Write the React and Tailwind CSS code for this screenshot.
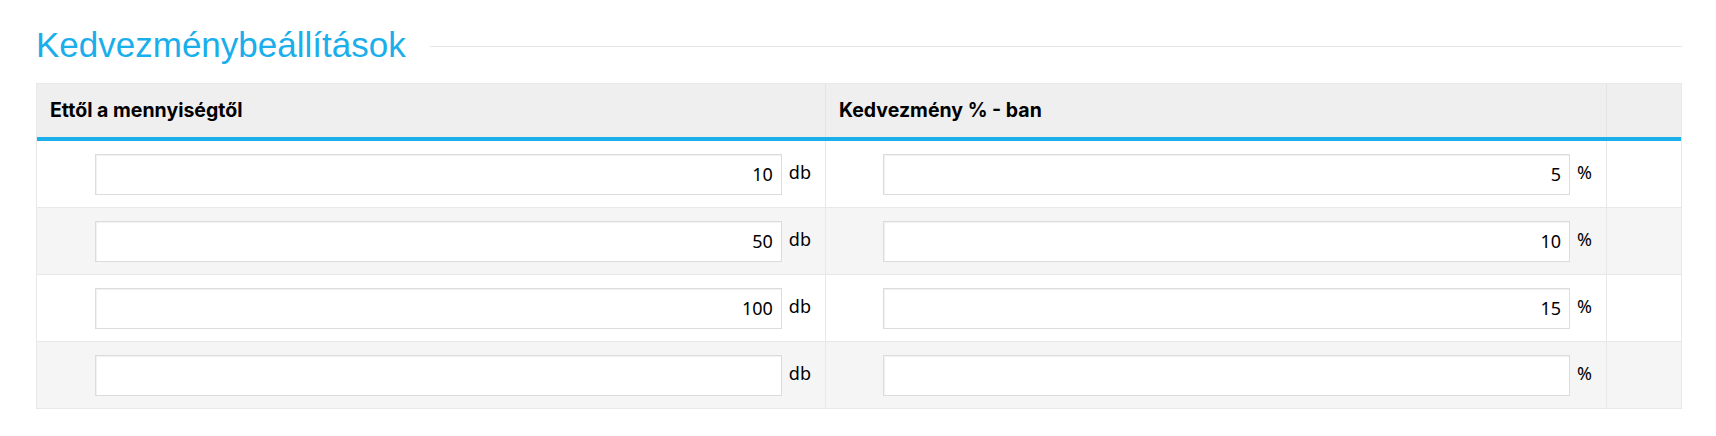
import React from 'react';

const rows = [
  { qty: '10', pct: '5' },
  { qty: '50', pct: '10' },
  { qty: '100', pct: '15' },
  { qty: '', pct: '' },
];

const Field = ({ value, unit }) => (
  <div className="flex items-center justify-end h-full pr-[14px]">
    <input
      type="text"
      defaultValue={value}
      className="w-[687px] h-[41px] bg-white border border-[#dcdcdc] shadow-[inset_1px_1px_1px_rgba(0,0,0,0.06)] text-right pr-[8px] text-[18px] text-black font-['Noto_Sans',sans-serif] outline-none"
    />
    <span className="ml-[7px] mb-[4px] text-[18px] text-black font-['Noto_Sans',sans-serif]">{unit}</span>
  </div>
);

const App = () => {
  return (
    <div className="bg-white min-h-screen pl-9 pr-[34px] pt-[25px]">
      {/* Title */}
      <div className="flex items-center gap-[24px]">
        <h2 className="text-[35px] leading-[40px] text-[#1aaeeb] font-['Liberation_Sans',Arial,sans-serif] whitespace-nowrap">
          Kedvezménybeállítások
        </h2>
        <div className="flex-1 h-px bg-[#e6e6e6] mt-[2px]" />
      </div>

      {/* Table */}
      <div className="mt-[18px] border border-[#e8e8e8] font-['Inter',sans-serif]">
        <div className="grid grid-cols-[789px_781px_1fr] bg-[#efefef] border-b-4 border-[#1aaeeb] h-[57px]">
          <div className="flex items-center pl-[13px] border-r border-[#e4e4e4] text-[19.5px] font-bold text-black">
            Ettől a mennyiségtől
          </div>
          <div className="flex items-center pl-[13px] border-r border-[#e4e4e4] text-[19.5px] font-bold text-black">
            Kedvezmény % - ban
          </div>
          <div />
        </div>

        {rows.map((r, i) => (
          <div
            key={i}
            className={`grid grid-cols-[789px_781px_1fr] ${i < rows.length - 1 ? 'h-[67px] border-b' : 'h-[66px]'} border-[#e8e8e8] ${i % 2 === 1 ? 'bg-[#f5f5f5]' : 'bg-white'}`}
          >
            <div className="border-r border-[#e8e8e8]">
              <Field value={r.qty} unit="db" />
            </div>
            <div className="border-r border-[#e8e8e8]">
              <Field value={r.pct} unit="%" />
            </div>
            <div />
          </div>
        ))}
      </div>
    </div>
  );
};

export default App;
